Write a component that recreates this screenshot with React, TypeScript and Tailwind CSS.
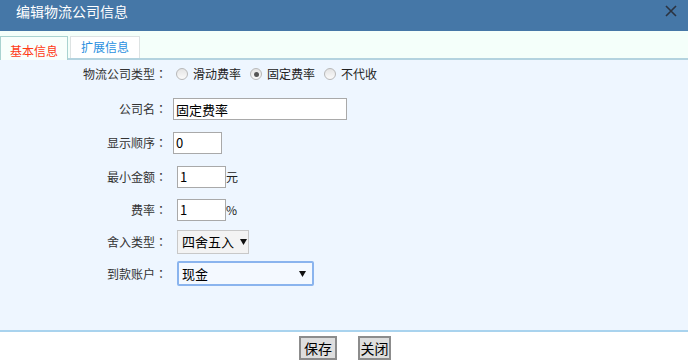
import React from 'react';

const font = { fontFamily: '"Noto Sans CJK SC", "Liberation Sans", sans-serif' };

function Label({ text }: { text: string }) {
  return (
    <div className="w-[167px] shrink-0 text-right text-[12px] text-[#333]">
      {text}
      <span className="inline-block w-[12px] text-center" style={{ fontFamily: '"Noto Sans CJK JP", sans-serif' }}>：</span>
    </div>
  );
}

function Radio({ checked, label }: { checked?: boolean; label: string }) {
  return (
    <label className="flex items-center gap-[5px] ml-[9px]">
      <span className="w-[12px] h-[12px] rounded-full border border-[#b8b8b8] bg-gradient-to-b from-[#e4e4e4] to-[#fbfbfb] flex items-center justify-center">
        {checked && <span className="w-[5px] h-[5px] rounded-full bg-[#555]" />}
      </span>
      <span className="text-[12px] text-[#222]">{label}</span>
    </label>
  );
}

function TextBox({ value, w, ml }: { value: string; w: string; ml: string }) {
  return (
    <input
      readOnly
      value={value}
      className={`${w} ${ml} h-[22px] border border-[#a9a9a9] bg-white px-[2px] text-[13px] text-black outline-none`}
      style={font}
    />
  );
}

function Arrow() {
  return (
    <svg width="7" height="6" viewBox="0 0 7 6">
      <path d="M0 0H7L3.5 6Z" fill="#111" />
    </svg>
  );
}

export default function App() {
  return (
    <div className="w-[688px] h-[363px] bg-white flex flex-col overflow-hidden" style={font}>
      {/* title bar */}
      <div className="h-[31px] shrink-0 bg-[#4577a7] flex items-center justify-between pl-[16px] pr-[11px]">
        <span className="text-white text-[14px] leading-none -mt-[10px]">编辑物流公司信息</span>
        <svg width="12" height="12" viewBox="0 0 12 12" className="-mt-[10px]">
          <path d="M1 1L11 11M11 1L1 11" stroke="#2b3340" strokeWidth="1.6" />
        </svg>
      </div>

      {/* tabs */}
      <div className="h-[29px] shrink-0 bg-[#f4fffa] border-b-2 border-[#b3d3df] flex items-end gap-[2px]">
        <div className="w-[68px] h-[24px] -mb-[2px] bg-[#f8fffc] border border-b-0 border-[#a9d3d0] flex items-end justify-center pb-[3px]">
          <span className="text-[12px] leading-none text-[#ff3b14]">基本信息</span>
        </div>
        <div className="w-[70px] h-[22px] bg-white border border-b-0 border-[#dde3e3] flex items-start justify-center pt-[4px]">
          <span className="text-[12px] leading-none text-[#2a8fe0]">扩展信息</span>
        </div>
      </div>

      {/* form */}
      <div className="flex-1 bg-[#eef6ff] border-b-2 border-[#a9d3ee] flex flex-col">
        <div className="flex items-center h-[28px]">
          <Label text="物流公司类型" />
          <div className="flex items-center">
            <Radio label="滑动费率" />
            <Radio checked label="固定费率" />
            <Radio label="不代收" />
          </div>
        </div>
        <div className="flex items-center h-[34px] mt-[4px]">
          <Label text="公司名" />
          <TextBox value="固定费率" w="w-[174px]" ml="ml-[6px]" />
        </div>
        <div className="flex items-center h-[33px]">
          <Label text="显示顺序" />
          <TextBox value="0" w="w-[49px]" ml="ml-[6px]" />
        </div>
        <div className="flex items-center h-[35px]">
          <Label text="最小金额" />
          <TextBox value="1" w="w-[49px]" ml="ml-[10px]" />
          <span className="text-[12px] text-[#222]">元</span>
        </div>
        <div className="flex items-center h-[31px]">
          <Label text="费率" />
          <TextBox value="1" w="w-[49px]" ml="ml-[10px]" />
          <span className="text-[12px] text-[#222]">%</span>
        </div>
        <div className="flex items-center h-[33px]">
          <Label text="舍入类型" />
          <div className="ml-[10px] w-[72px] h-[24px] border border-[#c8c8c8] bg-[#f3f3f3] flex items-center gap-[6px] pl-[4px]">
            <span className="text-[13px] text-black">四舍五入</span>
            <Arrow />
          </div>
        </div>
        <div className="flex items-center h-[31px]">
          <Label text="到款账户" />
          <div className="ml-[10px] w-[137px] h-[25px] border-2 border-[#8ab4ee] rounded-[2px] bg-[#f4f9ff] flex items-center justify-between pl-[3px] pr-[6px]">
            <span className="text-[13px] text-black">现金</span>
            <Arrow />
          </div>
        </div>
      </div>

      {/* footer */}
      <div className="h-[31px] shrink-0 bg-white flex items-start justify-center gap-[21px] pt-[4px] pl-[2px]">
        <button className="w-[38px] h-[24px] bg-[#dedede] border-2 border-[#8c8c8c] text-[14px] leading-none text-black">保存</button>
        <button className="w-[33px] h-[24px] bg-[#dedede] border-2 border-[#8c8c8c] text-[14px] leading-none text-black">关闭</button>
      </div>
    </div>
  );
}
